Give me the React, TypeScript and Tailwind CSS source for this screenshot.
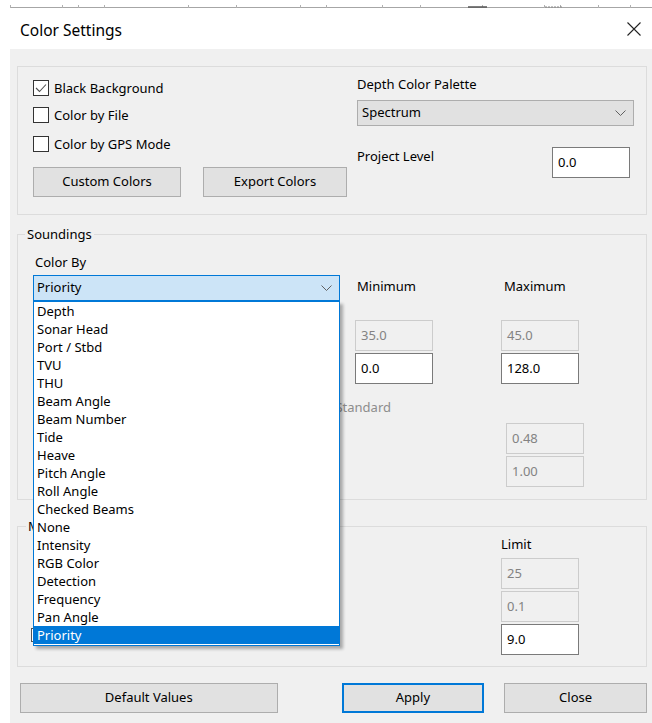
import type { ReactNode } from 'react'

const FONT = { fontFamily: '"Noto Sans", "Open Sans", Arial, sans-serif' }

const colorByOptions = [
  'Depth',
  'Sonar Head',
  'Port / Stbd',
  'TVU',
  'THU',
  'Beam Angle',
  'Beam Number',
  'Tide',
  'Heave',
  'Pitch Angle',
  'Roll Angle',
  'Checked Beams',
  'None',
  'Intensity',
  'RGB Color',
  'Detection',
  'Frequency',
  'Pan Angle',
  'Priority',
]

function Chevron() {
  return (
    <svg width="11" height="6" viewBox="0 0 11 6" className="shrink-0">
      <path d="M0.5 0.5 L5.5 5.5 L10.5 0.5" fill="none" stroke="#606060" strokeWidth="1" />
    </svg>
  )
}

function Checkbox({ checked, label }: { checked?: boolean; label: string }) {
  return (
    <div className="flex items-center h-[20px]">
      <div className="w-[16px] h-[16px] border border-[#333333] bg-white flex items-center justify-center">
        {checked && (
          <svg width="12" height="10" viewBox="0 0 12 10">
            <path d="M1 5 L4.5 8.5 L11 1.5" fill="none" stroke="#505050" strokeWidth="1.1" />
          </svg>
        )}
      </div>
      <span className="ml-[5px] leading-[18px]">{label}</span>
    </div>
  )
}

function Button({ children, className = '' }: { children: ReactNode; className?: string }) {
  return (
    <button
      className={`h-[30px] bg-[#e1e1e1] border border-[#adadad] flex items-center justify-center text-black ${className}`}
    >
      {children}
    </button>
  )
}

function NumBox({ value, disabled }: { value: string; disabled?: boolean }) {
  return (
    <div
      className={`w-[78px] h-[31px] flex items-center pl-[5px] ${
        disabled
          ? 'bg-[#f0f0f0] border border-[#cccccc] text-[#838383]'
          : 'bg-white border border-[#7a7a7a] text-black'
      }`}
    >
      {value}
    </div>
  )
}

function TopRuler() {
  const ticks = [10, 62, 78, 104, 188, 236, 300, 326, 382, 420, 482, 544, 560, 598, 630]
  return (
    <svg width="652" height="10" className="block">
      <line x1="10" y1="7.5" x2="652" y2="7.5" stroke="#a6a6a6" strokeWidth="1" />
      {ticks.map(x => (
        <line key={x} x1={x + 0.5} y1="5" x2={x + 0.5} y2="8" stroke="#b0b0b0" strokeWidth="1" />
      ))}
      <line x1="468" y1="7" x2="487" y2="7" stroke="#555555" strokeWidth="1.5" />
      <line x1="545" y1="7" x2="563" y2="7" stroke="#888888" strokeWidth="1" strokeDasharray="2 1" />
    </svg>
  )
}

export default function App() {
  return (
    <div className="w-[652px] h-[723px] bg-white relative overflow-hidden text-[13px] text-black" style={FONT}>
      <TopRuler />

      {/* Title bar */}
      <div className="h-[39px] flex items-start justify-between pl-[20px] pr-[11px]">
        <div className="text-[15.5px] leading-[20px] mt-[10px]">Color Settings</div>
        <svg width="14" height="14" viewBox="0 0 14 14" className="mt-[12px]">
          <path d="M0.5 0.5 L13.5 13.5 M13.5 0.5 L0.5 13.5" stroke="#222222" strokeWidth="1.1" />
        </svg>
      </div>

      {/* Dialog body */}
      <div className="ml-[10px] h-[674px] bg-[#f0f0f0] pl-[7px] pr-[5px] pt-[17px]">
        {/* General settings */}
        <div className="h-[149px] border border-[#dcdcdc] flex">
          <div className="pl-[15px] pt-[11px] w-[329px]">
            <Checkbox checked label="Black Background" />
            <div className="mt-[7px]">
              <Checkbox label="Color by File" />
            </div>
            <div className="mt-[9px]">
              <Checkbox label="Color by GPS Mode" />
            </div>
            <div className="mt-[13px] flex">
              <Button className="w-[148px]">Custom Colors</Button>
              <Button className="w-[144px] ml-[22px]">Export Colors</Button>
            </div>
          </div>
          <div className="ml-[10px] pt-[8px] w-[277px]">
            <div className="leading-[18px]">Depth Color Palette</div>
            <div className="mt-[7px] h-[26px] bg-[#e1e1e1] border border-[#adadad] flex items-center justify-between pl-[4px] pr-[7px]">
              <span>Spectrum</span>
              <Chevron />
            </div>
            <div className="mt-[21px] flex justify-between items-start pr-[4px]">
              <span className="leading-[18px]">Project Level</span>
              <NumBox value="0.0" />
            </div>
          </div>
        </div>

        {/* Soundings */}
        <fieldset className="mt-[10px] border border-[#dcdcdc] pb-[12px]">
          <legend className="ml-[7px] px-[2px] leading-[18px]">Soundings</legend>
          <div className="pl-[15px] pt-[10px]">
            <div className="flex">
              <div className="w-[307px]">
                <div className="pl-[2px] leading-[18px]">Color By</div>
                <div className="mt-[4px] h-[26px] bg-[#cce4f7] border border-[#0078d7] flex items-center justify-between pl-[3px] pr-[7px]">
                  <span>Priority</span>
                  <Chevron />
                </div>
              </div>
              <div className="ml-[15px] pt-[24px] flex leading-[18px]">
                <div className="w-[146px] pl-[2px]">Minimum</div>
                <div className="pl-[3px]">Maximum</div>
              </div>
            </div>
            <div className="mt-[19px] pl-[322px] flex">
              <div className="flex flex-col gap-[2px]">
                <NumBox value="35.0" disabled />
                <NumBox value="0.0" />
              </div>
              <div className="ml-[68px] flex flex-col gap-[2px]">
                <NumBox value="45.0" disabled />
                <NumBox value="128.0" />
              </div>
            </div>
            <div className="mt-[14px] w-[358px] text-right leading-[18px] text-[#8d8d8d]">Use IHO Standard</div>
            <div className="mt-[7px] pl-[473px] flex flex-col gap-[2px]">
              <NumBox value="0.48" disabled />
              <NumBox value="1.00" disabled />
            </div>
          </div>
        </fieldset>

        {/* Masking */}
        <fieldset className="mt-[17px] border border-[#dcdcdc] pb-[11px]">
          <legend className="ml-[8px] px-[2px] leading-[18px]">M</legend>
          <div className="flex items-end pl-[13px]">
            <div className="w-[120px] h-[14px] mb-[13px] bg-white border border-[#555555]" />
            <div className="ml-[350px] flex flex-col">
              <div className="leading-[18px]">Limit</div>
              <div className="mt-[5px] flex flex-col gap-[2px]">
                <NumBox value="25" disabled />
                <NumBox value="0.1" disabled />
                <NumBox value="9.0" />
              </div>
            </div>
          </div>
        </fieldset>

        {/* Dialog buttons */}
        <div className="mt-[16px] ml-[3px] flex">
          <Button className="w-[258px]">Default Values</Button>
          <Button className="w-[143px] ml-[64px] !border-2 !border-[#0078d7]">Apply</Button>
          <Button className="w-[143px] ml-[20px]">Close</Button>
        </div>
      </div>

      {/* Open Color By list */}
      <div className="absolute left-[33px] top-[301px] w-[307px] h-[345px] bg-white border border-[#0078d7] shadow-[3px_3px_3px_rgba(0,0,0,0.3)]">
        {colorByOptions.map(opt => (
          <div
            key={opt}
            className={`h-[18px] leading-[18px] pl-[3px] ${opt === 'Priority' ? 'bg-[#0078d7] text-white' : ''}`}
          >
            {opt}
          </div>
        ))}
      </div>
    </div>
  )
}
